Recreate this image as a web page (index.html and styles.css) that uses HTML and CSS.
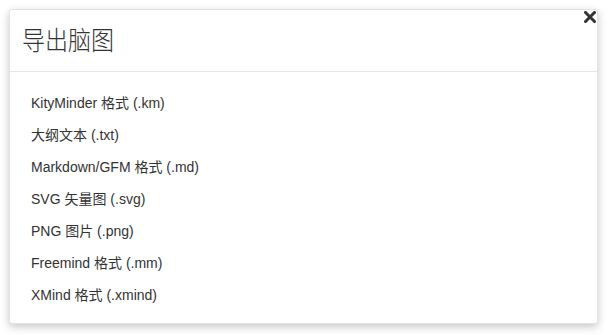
FILE: index.html
```html
<!DOCTYPE html>
<html lang="zh">
<head>
<meta charset="utf-8">
<title>导出脑图</title>
<link rel="stylesheet" href="styles.css">
</head>
<body>
<div class="modal">
  <button class="close" aria-label="关闭">
    <svg width="12" height="12" viewBox="0 0 12 12"><path d="M1.5 1.5 L10.5 10.5 M10.5 1.5 L1.5 10.5" stroke="#333" stroke-width="3" stroke-linecap="square"/></svg>
  </button>
  <div class="modal-header">
    <h3 class="title">导出脑图</h3>
  </div>
  <ul class="modal-body">
    <li>KityMinder 格式 (.km)</li>
    <li>大纲文本 (.txt)</li>
    <li>Markdown/GFM 格式 (.md)</li>
    <li>SVG 矢量图 (.svg)</li>
    <li>PNG 图片 (.png)</li>
    <li>Freemind 格式 (.mm)</li>
    <li>XMind 格式 (.xmind)</li>
  </ul>
</div>
</body>
</html>
```
FILE: styles.css
```css
html, body {
  margin: 0;
  padding: 0;
  background: #ffffff;
}
body {
  padding: 9px 10px 11px 9px;
  font-family: "Liberation Sans", "Noto Sans CJK SC", sans-serif;
  color: #333;
}
.modal {
  position: relative;
  background: #fff;
  border: 1px solid #e2e2e2;
  border-radius: 3px;
  box-shadow: 0 3px 9px rgba(0,0,0,0.22);
  height: 315px;
  box-sizing: border-box;
}
.close {
  position: absolute;
  top: 0px;
  right: 0px;
  width: 14px;
  height: 14px;
  padding: 0;
  border: 0;
  background: transparent;
  display: flex;
  align-items: center;
  justify-content: center;
}
.modal-header {
  height: 62px;
  border-bottom: 1px solid #e5e5e5;
  box-sizing: border-box;
  display: flex;
  align-items: center;
  padding: 0 12px 3px;
}
.title {
  margin: 0;
  font-family: "Noto Sans CJK SC", sans-serif;
  font-weight: 300;
  font-size: 23px;
  line-height: 1;
  color: #333;
  transform: scaleY(1.15);
}
.modal-body {
  list-style: none;
  margin: 0;
  padding: 15px 21px 0;
}
.modal-body li {
  height: 32px;
  line-height: 32px;
  font-size: 14px;
  color: #333;
}
```
